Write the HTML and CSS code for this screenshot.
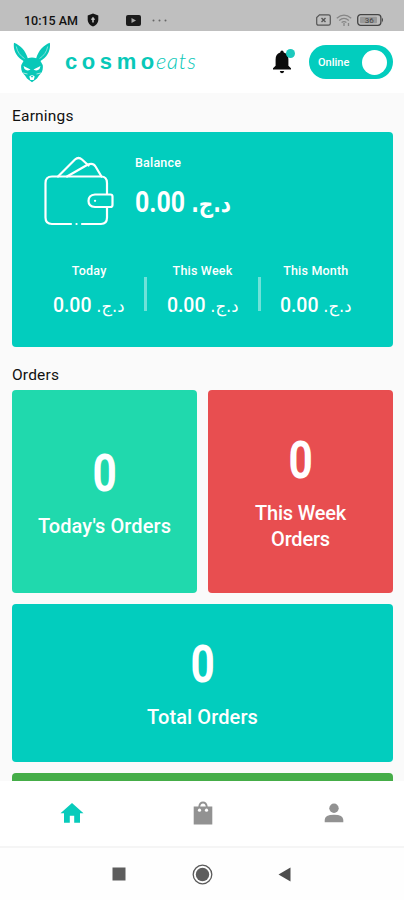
FILE: index.html
```
<!DOCTYPE html>
<html lang="en">
<head>
    <meta charset="UTF-8">
    <meta name="viewport" content="width=device-width, initial-scale=1.0">
    <title>Cosmoeats</title>
    <link rel="stylesheet" href="styles.css">
</head>
<body>
    <div class="statusbar">
        <span class="time">10:15 AM</span>
        <svg class="shield" width="12" height="14" viewBox="0 0 12 14"><path d="M6 0.5L11.3 2.6V7C11.3 10 9 12.3 6 13.5C3 12.3 0.7 10 0.7 7V2.6Z" fill="#151515"/><path d="M6 3.8L8.2 6.5L6.8 7V9.5H5.2V7L3.8 6.5Z" fill="#bfbfbf"/></svg>
        <svg class="video" width="15" height="11" viewBox="0 0 15 11"><rect width="15" height="11" rx="2" fill="#1c1c1c"/><path d="M5.5 3L10 5.5L5.5 8Z" fill="#aaa"/></svg>
        <svg class="dots" width="15" height="3" viewBox="0 0 15 3" fill="#666"><circle cx="1.5" cy="1.5" r="1"/><circle cx="7.5" cy="1.5" r="1"/><circle cx="13.5" cy="1.5" r="1"/></svg>
        <div class="status-right">
            <svg width="15" height="12" viewBox="0 0 15 12" fill="none" stroke="#555"><path d="M3.5 0.8H12.5Q14.3 0.8 14.3 2.5V9.5Q14.3 11.2 12.5 11.2H2.5Q0.7 11.2 0.7 9.5V3.5Z" stroke-width="1.2"/><path d="M5.5 4L9.5 8M9.5 4L5.5 8" stroke-width="1.4"/></svg>
            <svg width="16" height="13" viewBox="0 0 16 13" fill="none" stroke="#858585"><path d="M0.8 4.2Q8 -1.8 15.2 4.2M3.2 6.4Q8 2.4 12.8 6.4M5.6 8.5Q8 6.7 10.4 8.5" stroke-width="1.3"/><path d="M8 9V12M12.5 9V12" stroke-width="1.3"/></svg>
            <svg class="battery" width="27" height="12" viewBox="0 0 27 12"><rect x="0.7" y="0.7" width="23.2" height="10.6" rx="3" fill="none" stroke="#444" stroke-width="1.3"/><rect x="3" y="2.7" width="17" height="6.6" rx="1" fill="#999"/><path d="M25 3.6Q27 6 25 8.4Z" fill="#444"/><text x="12.3" y="9" text-anchor="middle">36</text></svg>
        </div>
    </div>

    <header class="header">
        <svg class="logo" width="38" height="41" viewBox="0 0 38 41">
            <path d="M1 0.8C-0.2 8 3.5 15 10.5 19L8.3 23C7.6 27.5 9 31 12 33.5L14 36.5L19 40.3L24 36.5L26 33.5C29 31 30.4 27.5 29.7 23L27.5 19C34.5 15 38 8 36.8 0.8C30.5 3.5 25.5 8.5 23.2 16.2C20.5 15.3 17.5 15.3 14.8 16.2C12.5 8.5 7.5 3.5 1 0.8Z" fill="#08c8b8"/>
            <path d="M3.3 4.5C4.2 10 7.5 14 11.5 16.5M34.7 4.5C33.8 10 30.5 14 26.5 16.5" fill="none" stroke="#9eeae3" stroke-width="0.8"/>
            <path d="M10.5 24L17.5 27.5Q14 29.5 11.5 27ZM27.5 24L20.5 27.5Q24 29.5 26.5 27Z" fill="#fff"/>
            <path d="M10 31L14.5 32M28 31L23.5 32" stroke="#b4eee8" stroke-width="0.9"/>
            <path d="M16.3 34.5Q19 31.5 21.7 34.5L20.7 38H17.3Z" fill="#fff"/>
            <path d="M17.5 33.8H20.5L19 35.8Z" fill="#08c8b8"/>
        </svg>
        <div class="brand"><span class="brand-bold">cosmo</span><span class="brand-script">eats</span></div>
        <div class="bell">
            <svg width="20" height="24" viewBox="0 0 20 24" fill="#0b0b0b"><path d="M10 0.5Q11.5 0.5 11.8 2.6C15 3.6 16.4 6 16.4 9.5V15.8L19 18.3V19.5H1V18.3L3.6 15.8V9.5C3.6 6 5 3.6 8.2 2.6Q8.5 0.5 10 0.5Z"/><path d="M7.8 21H12.2Q11.7 23.2 10 23.2Q8.3 23.2 7.8 21Z"/></svg>
            <span class="bell-dot"></span>
        </div>
        <div class="toggle"><span>Online</span><i class="knob"></i></div>
    </header>

    <main class="content">
        <h2 class="title">Earnings</h2>
        <section class="earnings">
            <div class="balance">
                <svg class="wallet" width="70" height="72" viewBox="0 0 70 72" fill="none" stroke="#fff" stroke-width="2.2" stroke-linecap="round" stroke-linejoin="round">
                    <path d="M27 68H8Q1.5 68 1.5 61.5V27Q1.5 20.5 8 20.5H57Q63 20.5 63 27V38M63 51V61.5Q63 68 57 68H38"/>
                    <path d="M14 20.5L31 3.5Q34.5 0.5 38 3.5L44.5 9.5"/>
                    <path d="M23 20.5L43.5 8.8Q49 6.5 51.5 10.5L57.5 20.5"/>
                    <path d="M66.5 38.5H51Q44.5 39 44.5 45Q44.5 50.5 51 51H66.5Q68.5 51 68.5 49V40.5Q68.5 38.5 66.5 38.5Z"/>
                    <path d="M51 44.8H51.1M32.5 68H32.6"/>
                </svg>
                <div class="balance-text">
                    <span class="label">Balance</span>
                    <span class="amount big">0.00 <bdi dir="rtl">د.ج.</bdi></span>
                </div>
            </div>
            <div class="periods">
                <div class="period">
                    <span class="label">Today</span>
                    <span class="amount">0.00 <bdi dir="rtl">د.ج.</bdi></span>
                </div>
                <div class="line"></div>
                <div class="period">
                    <span class="label">This Week</span>
                    <span class="amount">0.00 <bdi dir="rtl">د.ج.</bdi></span>
                </div>
                <div class="line"></div>
                <div class="period">
                    <span class="label">This Month</span>
                    <span class="amount">0.00 <bdi dir="rtl">د.ج.</bdi></span>
                </div>
            </div>
        </section>

        <h2 class="title orders-title">Orders</h2>
        <section class="orders">
            <div class="card green">
                <span class="count">0</span>
                <span class="card-label">Today's Orders</span>
            </div>
            <div class="card red">
                <span class="count">0</span>
                <span class="card-label">This Week Orders</span>
            </div>
            <div class="card total">
                <span class="count">0</span>
                <span class="card-label">Total Orders</span>
            </div>
            <div class="card next"></div>
        </section>
    </main>

    <nav class="tabs">
        <svg width="24" height="22" viewBox="0 0 24 22"><path d="M12 1L23.5 11.3H20V20.7H14.2V13.8H9.8V20.7H4V11.3H0.5Z" fill="#08cbbb"/></svg>
        <svg width="20" height="24" viewBox="0 0 20 24"><path d="M0.7 5.5H5.3Q6 0.5 10 0.5Q14 0.5 14.7 5.5H19.3V23.5H0.7ZM7.2 5.5H12.8Q12.3 2.4 10 2.4Q7.7 2.4 7.2 5.5Z" fill="#929292"/><circle cx="6.5" cy="9.2" r="1.6" fill="#fff"/><circle cx="13.5" cy="9.2" r="1.6" fill="#fff"/></svg>
        <svg width="20" height="20" viewBox="0 0 20 20" fill="#929292"><circle cx="10" cy="5.3" r="4.7"/><path d="M0.7 19.3V17Q0.7 11.8 10 11.8Q19.3 11.8 19.3 17V19.3Z"/></svg>
    </nav>
    <div class="sysnav">
        <svg width="14" height="14" viewBox="0 0 14 14"><rect x="0.5" y="0.5" width="13" height="13" fill="#5d5d5d"/></svg>
        <svg width="21" height="21" viewBox="0 0 21 21"><circle cx="10.5" cy="10.5" r="9.3" fill="none" stroke="#5a5a5a" stroke-width="1.3"/><circle cx="10.5" cy="10.5" r="6.7" fill="#5d5d5d"/></svg>
        <svg width="13" height="15" viewBox="0 0 13 15"><path d="M12.5 0.5V14.5L0.5 7.5Z" fill="#4d4d4d"/></svg>
    </div>
</body>
</html>
```
FILE: styles.css
```
* {
    box-sizing: border-box;
}

body {
    margin: 0;
    height: 900px;
    display: flex;
    flex-direction: column;
    overflow: hidden;
    background: #fafafa;
    font-family: Roboto, "Noto Sans", sans-serif;
    color: #111;
}

svg {
    display: block;
    flex: none;
}

.statusbar {
    height: 31px;
    flex: none;
    display: flex;
    align-items: center;
    padding: 9px 20px 0 24px;
    background: #bfbfbf;
}

.time {
    width: 56px;
    font-size: 12.5px;
    font-weight: 500;
    white-space: nowrap;
}

.shield {
    margin-left: 7px;
}

.video {
    margin-left: 27px;
}

.dots {
    margin-left: 11px;
}

.status-right {
    margin-left: auto;
    display: flex;
    align-items: center;
    gap: 5px;
}

.battery text {
    font-size: 8px;
    fill: #444;
}

.header {
    height: 62px;
    flex: none;
    display: flex;
    align-items: center;
    padding: 0 11px 0 13px;
    background: #fff;
}

.brand {
    display: flex;
    align-items: baseline;
    margin-left: 14px;
    margin-top: -3px;
    color: #08c8b8;
}

.brand-bold {
    width: 91px;
    font-family: "Liberation Sans", sans-serif;
    font-size: 22px;
    font-weight: 700;
    letter-spacing: 4.6px;
}

.brand-script {
    font-family: Lato, sans-serif;
    font-size: 22px;
    font-style: italic;
    font-weight: 300;
    letter-spacing: 0.8px;
}

.bell {
    position: relative;
    margin-left: auto;
    margin-right: 17px;
}

.bell-dot {
    position: absolute;
    top: -1px;
    right: -3px;
    width: 9px;
    height: 9px;
    border-radius: 50%;
    background: #1cc9bd;
}

.toggle {
    width: 84px;
    height: 34px;
    display: flex;
    align-items: center;
    justify-content: space-between;
    padding: 0 6px 0 9px;
    border-radius: 17px;
    background: #02cdbe;
    color: #fff;
    font-size: 11px;
    font-weight: 500;
}

.knob {
    width: 25px;
    height: 25px;
    border-radius: 50%;
    background: #fff;
}

.content {
    flex: 1;
    min-height: 0;
    overflow: hidden;
    padding: 12px 11px 0 12px;
}

.title {
    margin: 0;
    height: 27px;
    line-height: 23px;
    font-size: 15.5px;
    font-weight: 400;
    letter-spacing: 0.2px;
}

.orders-title {
    margin-top: 16px;
    line-height: 24px;
}

.earnings {
    height: 215px;
    padding-top: 22px;
    border-radius: 4px;
    background: #02cdbe;
    color: #fff;
}

.balance {
    display: flex;
    padding-left: 32px;
    gap: 21px;
}

.wallet {
    margin-top: 2px;
}

.label {
    font-size: 12.5px;
    font-weight: 500;
    line-height: 18px;
    letter-spacing: 0.2px;
    white-space: nowrap;
}

.amount {
    font-size: 20.5px;
    font-weight: 500;
    line-height: 30px;
    white-space: nowrap;
    transform: scaleX(0.95);
}

.amount bdi {
    font-family: "DejaVu Sans", sans-serif;
    font-size: 0.84em;
    font-weight: 400;
}

.balance-text {
    display: flex;
    flex-direction: column;
}

.big {
    margin-top: 11px;
    font-size: 30px;
    line-height: 38px;
    font-weight: 700;
    transform: scaleX(0.83);
    transform-origin: left;
}

.big bdi {
    font-size: 0.8em;
    font-weight: 700;
}

.periods {
    display: flex;
    align-items: center;
    margin-top: 34px;
    padding: 0 22px;
}

.period {
    flex: 1;
    display: flex;
    flex-direction: column;
    align-items: center;
    gap: 10px;
}

.line {
    width: 3px;
    height: 34px;
    margin-top: 4px;
    background: #6fe2d9;
}

.orders {
    display: grid;
    grid-template-columns: 1fr 1fr;
    grid-template-rows: 203px 158px 60px;
    gap: 11px;
}

.card {
    display: flex;
    flex-direction: column;
    align-items: center;
    justify-content: center;
    border-radius: 4px;
    color: #fff;
    text-align: center;
}

.green {
    background: #20d9ad;
}

.red {
    background: #e84e50;
}

.total {
    grid-column: 1 / 3;
    background: #02cdbe;
}

.next {
    grid-column: 1 / 3;
    background: #45ad48;
}

.count {
    height: 62px;
    line-height: 58px;
    font-size: 51px;
    font-weight: 700;
    transform: scaleX(0.83);
}

.card-label {
    width: 140px;
    margin-top: 6px;
    font-size: 20px;
    font-weight: 500;
    line-height: 26px;
    letter-spacing: 0.1px;
}

.red .card-label {
    width: 110px;
    letter-spacing: -0.2px;
}

.tabs {
    height: 67px;
    flex: none;
    display: grid;
    grid-template-columns: 1fr 1fr 1fr;
    align-items: center;
    justify-items: center;
    padding: 0 5px 1px 6px;
    border-bottom: 2px solid #f5f5f5;
    background: #fff;
}

.sysnav {
    height: 52px;
    flex: none;
    display: flex;
    align-items: center;
    justify-content: space-between;
    padding: 0 113px 0 112px;
    background: #fefefe;
}
```
